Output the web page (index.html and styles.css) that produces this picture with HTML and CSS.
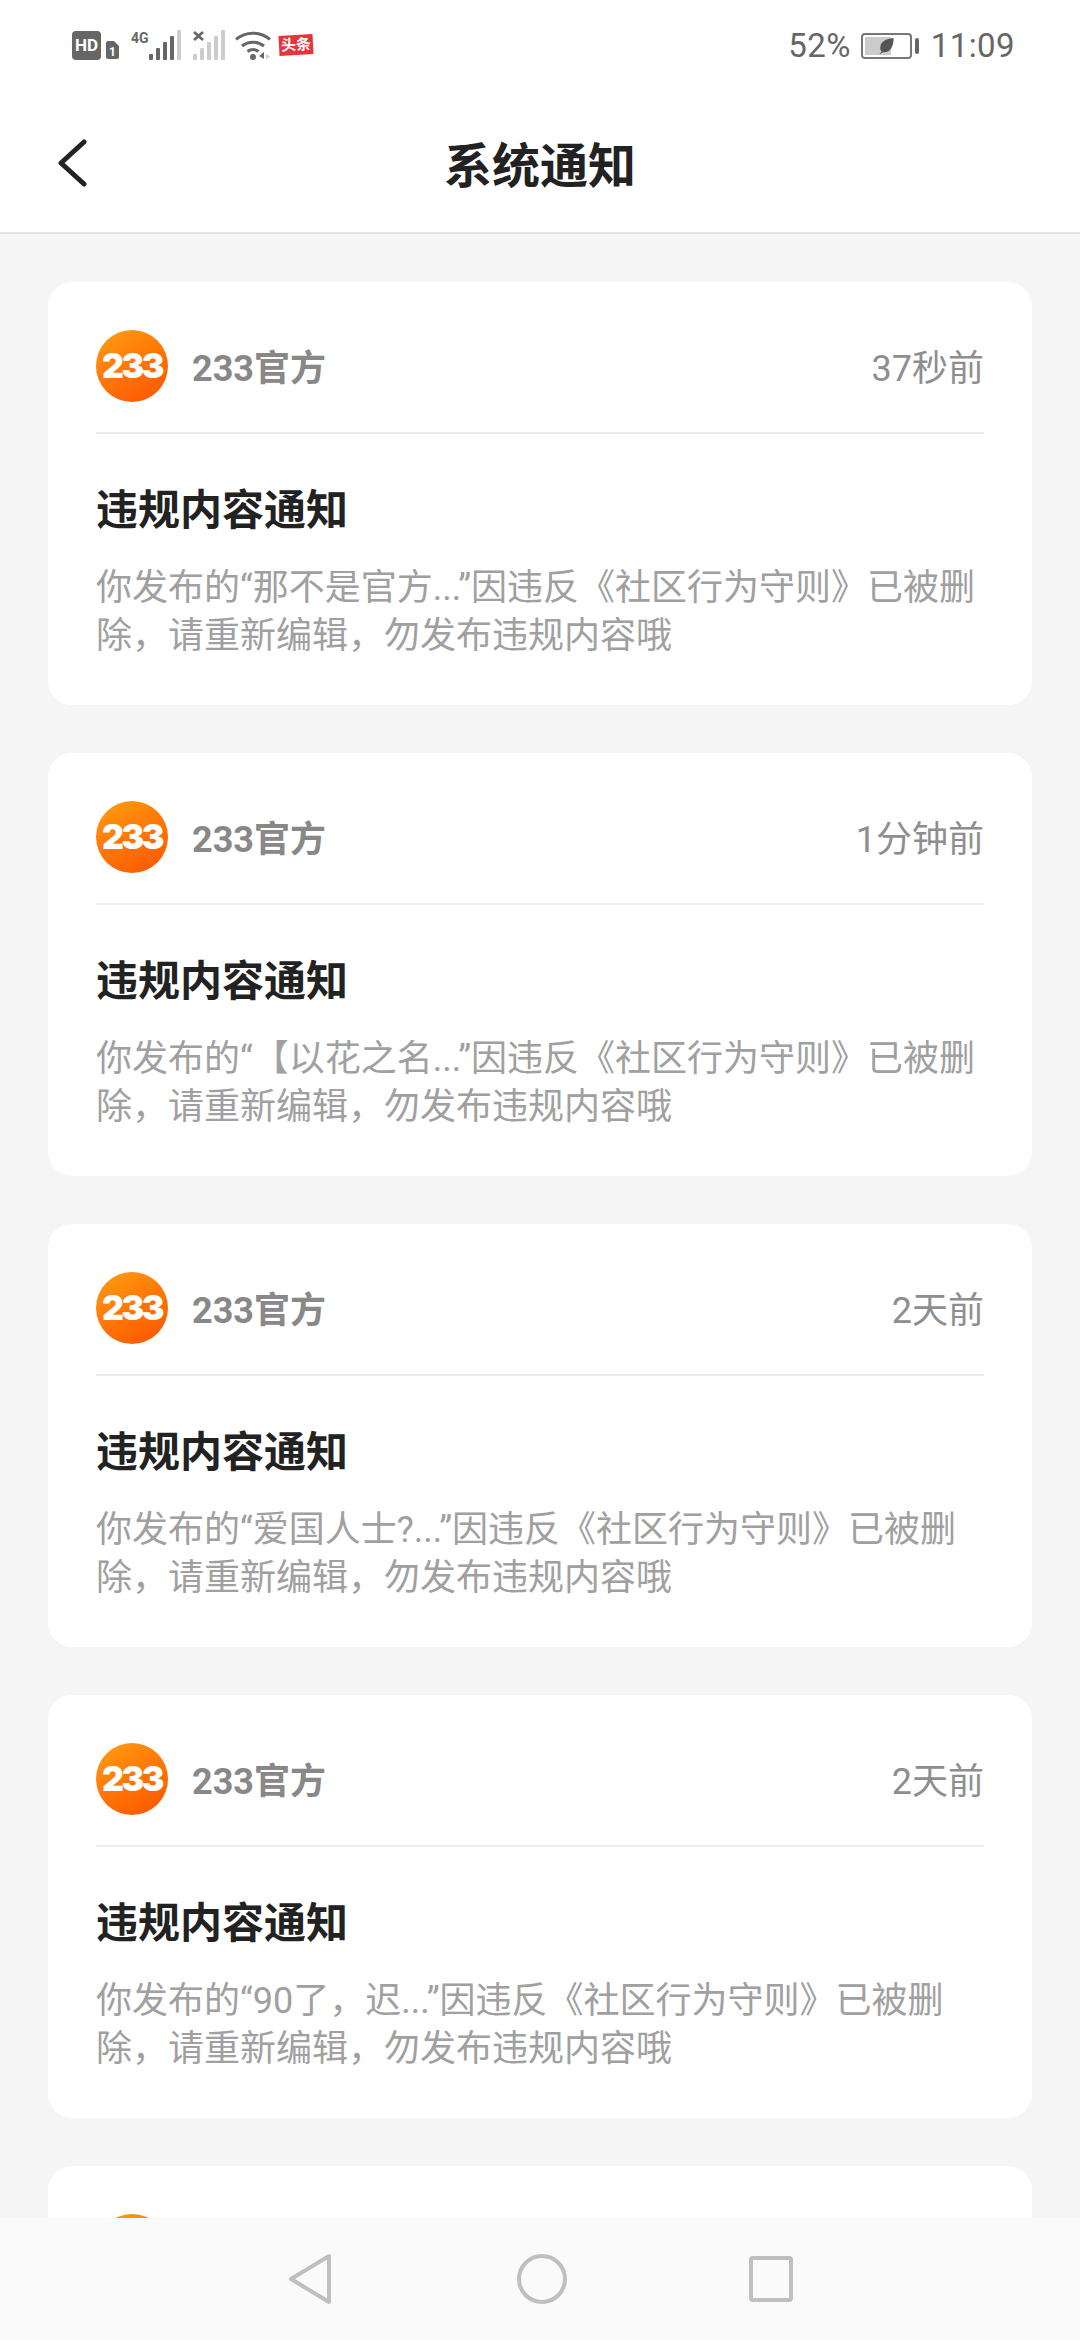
FILE: index.html
```html
<!DOCTYPE html>
<html lang="zh-CN">
<head>
    <meta charset="UTF-8">
    <meta name="viewport" content="width=device-width, initial-scale=1.0">
    <title>系统通知</title>
    <link rel="stylesheet" href="styles.css">
</head>
<body>

<div class="app">

    <!-- Status bar -->
    <div class="status-bar">
        <div class="status-left">
            <span class="hd">HD</span>
            <svg class="sim" width="13" height="18" viewBox="0 0 13 18">
                <path d="M2 0h6l5 5v11a2 2 0 0 1-2 2H2a2 2 0 0 1-2-2V2a2 2 0 0 1 2-2z" fill="#666"/>
                <text x="6.5" y="15" text-anchor="middle" class="sim-num">1</text>
            </svg>
            <svg class="signal-one" width="50" height="30" viewBox="0 0 50 30">
                <text x="0" y="13" class="net">4G</text>
                <rect x="18" y="24" width="4" height="6" rx="1" fill="#666"/>
                <rect x="25" y="18" width="4" height="12" rx="1" fill="#666"/>
                <rect x="32" y="12" width="4" height="18" rx="1" fill="#666"/>
                <rect x="39" y="6" width="4" height="24" rx="1" fill="#666"/>
                <rect x="46" y="0" width="4" height="30" rx="1" fill="#ccc"/>
            </svg>
            <svg class="signal-two" width="32" height="30" viewBox="0 0 32 30">
                <path d="M1 2l9 8M10 2l-9 8" stroke="#666" stroke-width="2.6" fill="none"/>
                <rect x="0" y="24" width="4" height="6" rx="1" fill="#ccc"/>
                <rect x="7" y="18" width="4" height="12" rx="1" fill="#ccc"/>
                <rect x="14" y="12" width="4" height="18" rx="1" fill="#ccc"/>
                <rect x="21" y="6" width="4" height="24" rx="1" fill="#ccc"/>
                <rect x="28" y="0" width="4" height="30" rx="1" fill="#ccc"/>
            </svg>
            <svg class="wifi" width="36" height="30" viewBox="0 0 36 30">
                <path d="M1 9.500C10.500 1 25.500 1 35 9.500" stroke="#666" stroke-width="3" fill="none"/>
                <path d="M7 16c6.500-5 15.500-5 22 0" stroke="#666" stroke-width="3" fill="none"/>
                <path d="M12.500 21.500c3.500-2.500 7.500-2.500 11 0" stroke="#666" stroke-width="3" fill="none"/>
                <circle cx="18" cy="27" r="3" fill="#666"/>
                <path d="M29 22v7l-5-3z" fill="#666"/>
                <path d="M31 24l4 2.500-4 2.500z" fill="#ccc"/>
            </svg>
            <span class="toutiao">头条</span>
        </div>
        <div class="status-right">
            <span>52%</span>
            <div class="battery">
                <div class="battery-body">
                    <div class="battery-level">
                        <svg class="leaf" width="15" height="16" viewBox="0 0 16 18">
                            <path d="M16 0C7 1 1 4 1 11c0 2 .5 3.500 1.500 4.500L0 18h1l3-2c8 1 12-6 12-16z" fill="#555"/>
                        </svg>
                    </div>
                </div>
                <div class="battery-cap"></div>
            </div>
            <span class="clock">11:09</span>
        </div>
    </div>

    <!-- Title bar -->
    <div class="title-bar">
        <svg class="back" width="30" height="48" viewBox="0 0 30 48">
            <path d="M27 3L4 24l23 21" stroke="#222" stroke-width="5" stroke-linecap="round" stroke-linejoin="round" fill="none"/>
        </svg>
        <h1>系统通知</h1>
    </div>

    <!-- Notification list -->
    <div class="list">

        <div class="card">
            <div class="card-head">
                <div class="logo"><span>233</span></div>
                <span class="name">233官方</span>
                <span class="time">37秒前</span>
            </div>
            <h3>违规内容通知</h3>
            <p>你发布的“那不是官方...”因违反《社区行为守则》已被删除，请重新编辑，勿发布违规内容哦</p>
        </div>

        <div class="card">
            <div class="card-head">
                <div class="logo"><span>233</span></div>
                <span class="name">233官方</span>
                <span class="time">1分钟前</span>
            </div>
            <h3>违规内容通知</h3>
            <p>你发布的“【以花之名...”因违反《社区行为守则》已被删除，请重新编辑，勿发布违规内容哦</p>
        </div>

        <div class="card">
            <div class="card-head">
                <div class="logo"><span>233</span></div>
                <span class="name">233官方</span>
                <span class="time">2天前</span>
            </div>
            <h3>违规内容通知</h3>
            <p>你发布的“爱国人士?...”因违反《社区行为守则》已被删除，请重新编辑，勿发布违规内容哦</p>
        </div>

        <div class="card">
            <div class="card-head">
                <div class="logo"><span>233</span></div>
                <span class="name">233官方</span>
                <span class="time">2天前</span>
            </div>
            <h3>违规内容通知</h3>
            <p>你发布的“90了，迟...”因违反《社区行为守则》已被删除，请重新编辑，勿发布违规内容哦</p>
        </div>

        <!-- Only the top of this card shows above the navigation bar -->
        <div class="card">
            <div class="card-head">
                <div class="logo"></div>
            </div>
        </div>

    </div>

    <!-- Navigation bar -->
    <div class="nav-bar">
        <svg class="nav-back" width="44" height="52" viewBox="0 0 44 52">
            <path d="M41 3v46L3 26z" stroke="#bfbfbf" stroke-width="4" stroke-linejoin="round" fill="none"/>
        </svg>
        <svg width="50" height="50" viewBox="0 0 50 50">
            <circle cx="25" cy="25" r="23" stroke="#bfbfbf" stroke-width="4" fill="none"/>
        </svg>
        <svg class="nav-recent" width="44" height="46" viewBox="0 0 44 46">
            <rect x="2" y="2" width="40" height="42" rx="2" stroke="#bfbfbf" stroke-width="4" fill="none"/>
        </svg>
    </div>

</div>

</body>
</html>
```

FILE: styles.css
```css
body {
    font-family: Roboto, "Noto Sans CJK SC", sans-serif;
    margin: 0;
    padding: 0;
    background-color: #f5f5f5;
    text-spacing-trim: space-all;
}

.app {
    width: 1080px;
    height: 2340px;
    display: flex;
    flex-direction: column;
    overflow: hidden;
}

.status-bar {
    height: 92px;
    flex: none;
    box-sizing: border-box;
    padding: 30px 65px 0 72px;
    background-color: #fff;
    display: flex;
    justify-content: space-between;
    align-items: flex-start;
    color: #666;
}

.status-left {
    display: flex;
    align-items: flex-start;
}

.hd {
    width: 29px;
    height: 29px;
    margin-top: 1px;
    background-color: #666;
    border-radius: 4px;
    color: #fff;
    font-size: 17px;
    font-weight: 700;
    line-height: 29px;
    text-align: center;
}

.sim {
    margin: 11px 0 0 5px;
}

.sim-num {
    font-size: 12px;
    font-weight: 700;
    fill: #fff;
}

.signal-one {
    margin-left: 12px;
}

.net {
    font-size: 14px;
    font-weight: 700;
    fill: #666;
}

.signal-two {
    margin-left: 12px;
}

.wifi {
    margin-left: 10px;
}

.toutiao {
    width: 34px;
    height: 20px;
    margin: 5px 0 0 8px;
    background-color: #e8323c;
    color: #fff;
    font-size: 15px;
    font-weight: 700;
    line-height: 20px;
    text-align: center;
    transform: rotate(-3deg);
}

.status-right {
    display: flex;
    align-items: center;
    font-size: 33px;
    line-height: 32px;
    letter-spacing: 0.4px;
}

.battery {
    display: flex;
    align-items: center;
    margin: 0 12px 0 10px;
}

.battery-body {
    width: 51px;
    height: 26px;
    box-sizing: border-box;
    border: 2px solid #777;
    border-radius: 4px;
    padding: 2px;
}

.battery-level {
    width: 26px;
    height: 18px;
    background-color: #ccc;
    display: flex;
    align-items: center;
    justify-content: flex-end;
}

.leaf {
    flex: none;
    margin-right: -3px;
}

.battery-cap {
    width: 4px;
    height: 16px;
    margin-left: 3px;
    background-color: #666;
    border-radius: 2px;
}

.title-bar {
    height: 142px;
    flex: none;
    box-sizing: border-box;
    background-color: #fff;
    border-bottom: 2px solid #e3e3e3;
    display: flex;
    align-items: center;
    justify-content: center;
    position: relative;
}

.title-bar h1 {
    margin: 0;
    font-size: 48px;
    font-weight: 700;
    color: #222;
}

.back {
    position: absolute;
    left: 57px;
    top: 47px;
}

.list {
    flex: 1;
    min-height: 0;
    overflow: hidden;
    padding: 48px 48px 0;
    display: flex;
    flex-direction: column;
    gap: 48px;
}

.card {
    height: 423px;
    flex: none;
    box-sizing: border-box;
    padding: 48px 48px 0;
    background-color: #fff;
    border-radius: 24px;
}

.card-head {
    height: 102px;
    display: flex;
    align-items: flex-start;
    border-bottom: 2px solid #ececec;
}

.logo {
    width: 72px;
    height: 72px;
    flex: none;
    border-radius: 50%;
    background: linear-gradient(150deg, #ffa012 0%, #ff7a08 45%, #fb5300 100%);
    display: flex;
    align-items: center;
    justify-content: center;
}

.logo span {
    font-family: Inter, sans-serif;
    font-size: 34px;
    font-weight: 900;
    line-height: 34px;
    color: #fff;
    letter-spacing: -2.5px;
}

.name {
    margin: 3px 0 0 24px;
    font-size: 36px;
    font-weight: 700;
    line-height: 72px;
    color: #888;
}

.time {
    margin: 3px 0 0 auto;
    font-size: 36px;
    line-height: 72px;
    color: #8e8e8e;
}

.card h3 {
    margin: 49px 0 0;
    font-size: 42px;
    font-weight: 700;
    line-height: 56px;
    color: #222;
}

.card p {
    margin: 25px 0 0;
    font-size: 36px;
    line-height: 48px;
    color: #a0a0a0;
}

.nav-bar {
    height: 122px;
    flex: none;
    background-color: #fafafa;
    display: flex;
    align-items: center;
    justify-content: center;
    gap: 180px;
}

.nav-back {
    margin-right: 5px;
}

.nav-recent {
    margin-left: 2px;
}
```
